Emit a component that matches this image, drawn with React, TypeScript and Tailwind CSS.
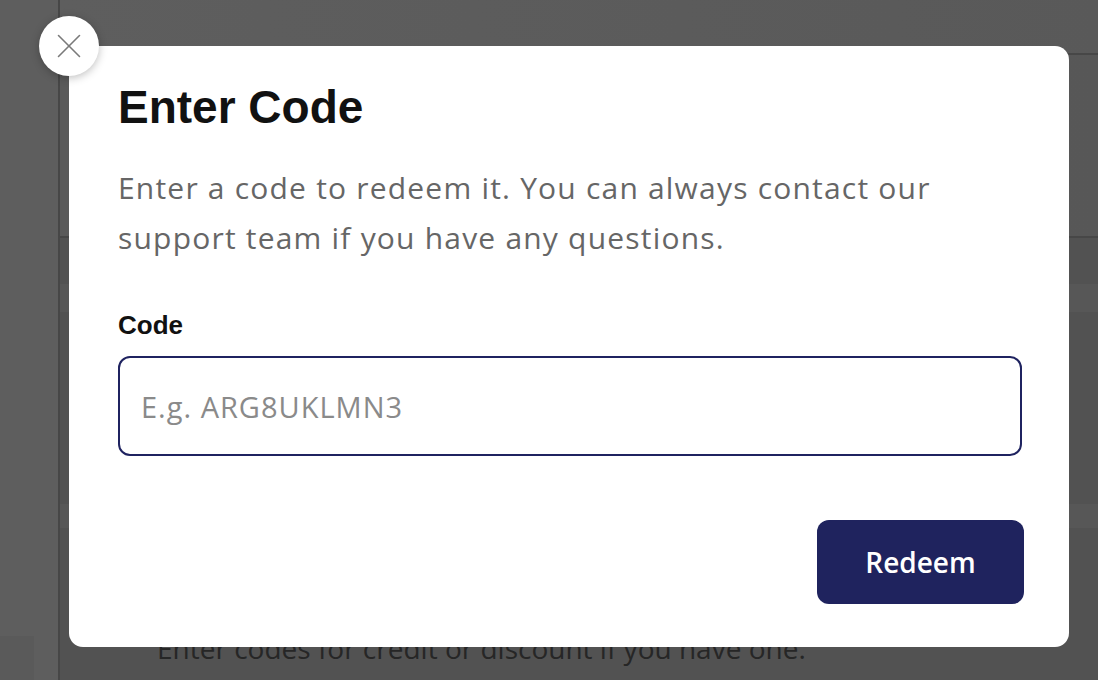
const body = { fontFamily: '"Open Sans", "Noto Sans", sans-serif' }
const heading = { fontFamily: '"Liberation Sans", Arial, sans-serif' }

function CloseIcon() {
  return (
    <svg width="24" height="24" viewBox="0 0 24 24" fill="none" stroke="#7a7a7a" strokeWidth="1.6" strokeLinecap="round">
      <path d="M1.5 1.5 22.5 22.5" />
      <path d="M22.5 1.5 1.5 22.5" />
    </svg>
  )
}

function BackgroundPage() {
  return (
    <div className="flex h-[680px] w-[1098px] overflow-hidden bg-[#525252]">
      <aside className="flex w-[60px] shrink-0 flex-col justify-end border-r-2 border-[#474747] bg-[#5e5e5e]">
        <div className="h-[44px] w-[34px] bg-[#5a5a5a]" />
      </aside>
      <main className="flex flex-1 flex-col">
        <div className="h-[55px] border-b-2 border-[#474747] bg-gradient-to-r from-[#5e5e5e] to-[#595959]" />
        <div className="h-[183px] border-b-2 border-[#474747] bg-gradient-to-r from-[#5a5a5a] to-[#575757]" />
        <div className="h-[46px]" />
        <div className="h-[28px] bg-[#575757]" />
        <div className="h-[192px]" />
        <div className="h-[24px] bg-[#575757]" />
        <div className="flex flex-1 items-end pb-[12px] pl-[97px]">
          <p className="text-[28px] leading-[40px] text-[#262626]" style={body}>
            Enter codes for credit or discount if you have one.
          </p>
        </div>
      </main>
    </div>
  )
}

function RedeemDialog() {
  return (
    <div className="absolute left-[69px] top-[46px] w-[1000px] rounded-[14px] bg-white px-[49px] pb-[43px] pt-[33px]">
      <button
        type="button"
        className="absolute -left-[30px] -top-[30px] flex h-[60px] w-[60px] items-center justify-center rounded-full bg-white shadow-[0_2px_8px_rgba(0,0,0,0.25)]"
      >
        <CloseIcon />
      </button>
      <h1 className="text-[46px] font-bold leading-[56px] text-[#111]" style={heading}>
        Enter Code
      </h1>
      <p className="mt-[28px] text-[30px] leading-[50px] tracking-[1.2px] text-[#666]" style={body}>
        Enter a code to redeem it. You can always contact our
        <br />
        support team if you have any questions.
      </p>
      <label className="mt-[46px] block text-[26px] font-bold leading-[32px] text-[#111]" style={heading}>
        Code
      </label>
      <input
        type="text"
        placeholder="E.g. ARG8UKLMN3"
        className="mt-[15px] h-[100px] w-[904px] rounded-[12px] border-2 border-[#1f2360] px-[21px] text-[29px] tracking-[1px] text-[#222] outline-none placeholder:text-[#8a8a8a]"
        style={body}
      />
      <div className="mt-[64px] flex justify-end">
        <button
          type="button"
          className="-mr-[4px] h-[84px] w-[207px] rounded-[12px] bg-[#1f235e] text-[28px] font-semibold text-white"
          style={body}
        >
          Redeem
        </button>
      </div>
    </div>
  )
}

export default function App() {
  return (
    <div className="relative h-[680px] w-[1098px] overflow-hidden">
      <BackgroundPage />
      <RedeemDialog />
    </div>
  )
}
